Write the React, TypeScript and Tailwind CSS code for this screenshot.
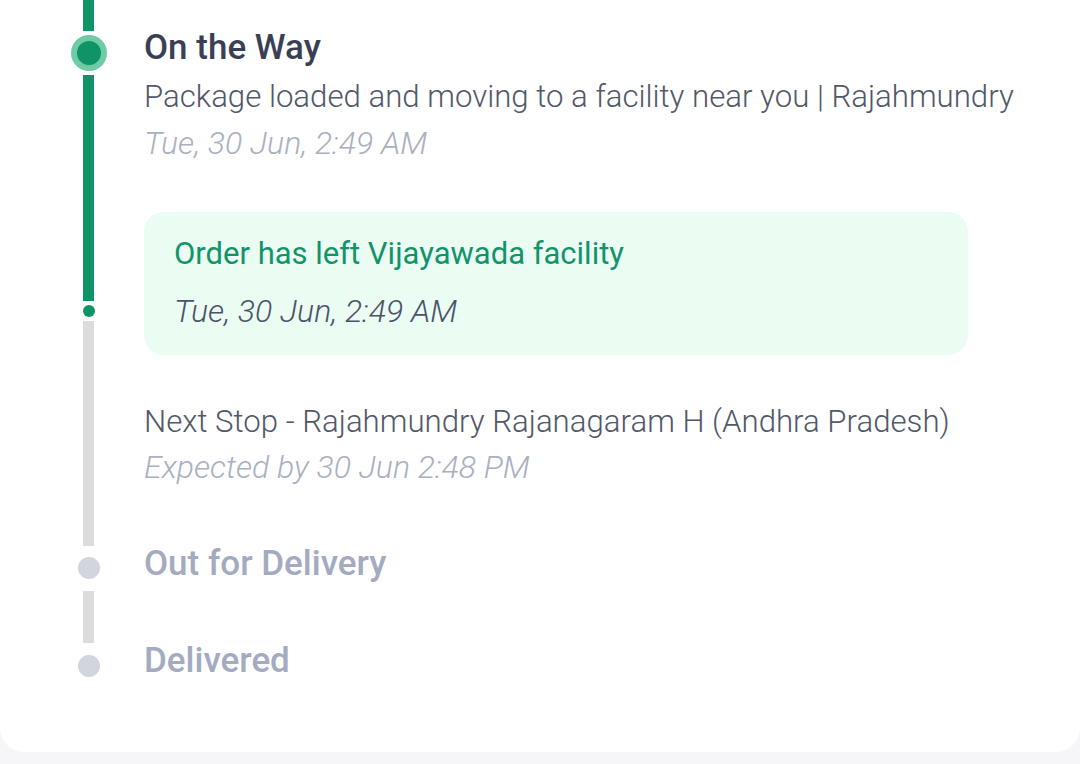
import React from "react";

const font = { fontFamily: "Roboto, 'Noto Sans', sans-serif" };

export default function App() {
  return (
    <div className="min-h-[764px] w-[1080px] bg-[#f6f6f9]" style={font}>
      <div className="flex h-[752px] w-full rounded-b-[24px] bg-white pl-[63px]">
        {/* timeline rail */}
        <div className="flex w-[51px] flex-col items-center">
          <div className="h-[31px] w-[11px] bg-[#0e9466]" />
          <div className="mt-[4px] flex h-[36px] w-[36px] items-center justify-center rounded-full bg-[#6fcaa6]">
            <div className="h-[24px] w-[24px] rounded-full bg-[#0e9466]" />
          </div>
          <div className="mt-[4px] h-[226px] w-[11px] bg-[#0e9466]" />
          <div className="flex h-[20px] w-[20px] items-center justify-center rounded-full bg-white">
            <div className="h-[12px] w-[12px] rounded-full bg-[#0e9466]" />
          </div>
          <div className="h-[225px] w-[11px] bg-[#dcdcdc]" />
          <div className="mt-[11px] h-[22px] w-[22px] rounded-full bg-[#d2d5de]" />
          <div className="mt-[12px] h-[52px] w-[11px] bg-[#dcdcdc]" />
          <div className="mt-[12px] h-[22px] w-[22px] rounded-full bg-[#d2d5de]" />
        </div>

        {/* content */}
        <div className="ml-[30px] flex w-[920px] flex-col">
          <div className="mt-[28px] text-[35px] font-medium leading-[40px] text-[#3a3f55]">
            On the Way
          </div>
          <div className="mt-[9px] whitespace-nowrap text-[31.2px] font-light leading-[40px] text-[#515869]">
            Package loaded and moving to a facility near you | Rajahmundry
          </div>
          <div className="mt-[8px] text-[32px] font-light italic leading-[36px] text-[#a9b0c2]">
            Tue, 30 Jun, 2:49 AM
          </div>

          <div className="mt-[51px] w-[824px] rounded-[20px] bg-[#ebfcf3] pb-[26px] pl-[30px] pt-[24px]">
            <div className="text-[31px] leading-[36px] text-[#12946a]">
              Order has left Vijayawada facility
            </div>
            <div className="mt-[21px] text-[32px] font-light italic leading-[36px] text-[#4b5369]">
              Tue, 30 Jun, 2:49 AM
            </div>
          </div>

          <div className="mt-[47px] whitespace-nowrap text-[31.2px] font-light leading-[40px] text-[#515869]">
            Next Stop - Rajahmundry Rajanagaram H (Andhra Pradesh)
          </div>
          <div className="mt-[7px] text-[32px] font-light italic leading-[36px] text-[#a9b0c2]">
            Expected by 30 Jun 2:48 PM
          </div>

          <div className="mt-[59px] text-[35px] font-medium leading-[40px] text-[#a4aabf]">
            Out for Delivery
          </div>
          <div className="mt-[57px] text-[35px] font-medium leading-[40px] text-[#a4aabf]">
            Delivered
          </div>
        </div>
      </div>
    </div>
  );
}
